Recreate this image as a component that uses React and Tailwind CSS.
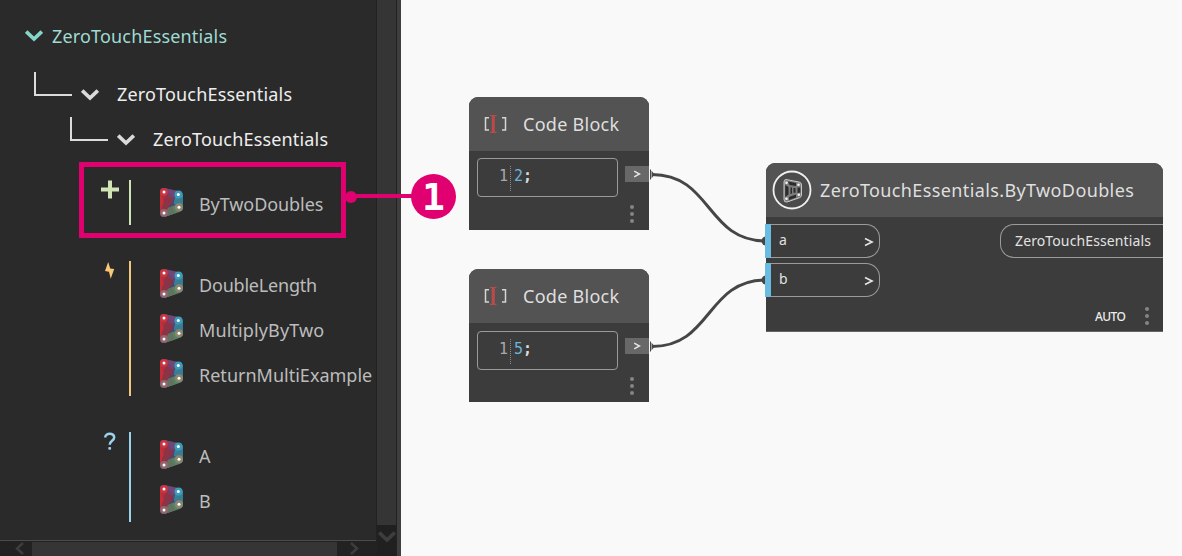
import React from 'react';

const SANS = "font-['Noto_Sans',sans-serif]";

function Chevron({ className = '' }) {
  return (
    <svg width="18" height="12" viewBox="0 0 18 12" className={`block shrink-0 ${className}`} fill="none">
      <path d="M1.2 1.6 L9 9 L16.8 1.6" stroke="currentColor" strokeWidth="3.7" />
    </svg>
  );
}

function DynamoIcon() {
  return (
    <svg width="23" height="29" viewBox="0 0 23 29" className="block shrink-0">
      <path d="M4 0 L19 3.2 Q23 4 23 8 V19 Q23 22.500 20 23.700 L5 28.800 Q0 29.500 0 25 V4 Q0 0 4 0Z" fill="#50466c" />
      <path d="M4 0 L19 3.2 L17 10 L8 9Z" fill="#704775" />
      <path d="M0 4 Q0 0 4 0 Q7 0 8 4 V20 L4 28.800 L0 25Z" fill="#b92c37" />
      <path d="M8 5 L13 13 L8 20 L2 25 L2 14Z" fill="#8c3346" />
      <path d="M0 4 L4 14 L0 23Z" fill="#c32e38" />
      <path d="M8 4 L16 13 L8 9Z" fill="#793e67" />
      <path d="M15 10 L19 3.2 Q23 4 23 8 V19 L14 16Z" fill="#3488a4" />
      <path d="M14 13 L23 8 V19 L17 19Z" fill="#397d94" />
      <path d="M8 20 L18 16 L23 19 Q23 22.500 20 23.700 L5 28.800Z" fill="#578464" />
      <path d="M8 20 L12 18.500 L15 25.400 L5 28.800Z" fill="#61735f" />
      <circle cx="4" cy="4" r="3.9" fill="#c73645" />
      <circle cx="18.5" cy="6.600" r="4" fill="#3c9cbc" />
      <circle cx="19" cy="19.200" r="4" fill="#8c866f" />
      <circle cx="4" cy="24.900" r="3.9" fill="#936570" />
      <circle cx="4" cy="4" r="1.5" fill="#fff" />
      <circle cx="18.3" cy="6.600" r="1.5" fill="#fff" />
      <circle cx="19" cy="19.200" r="1.5" fill="#fff" />
      <circle cx="4" cy="24.900" r="1.5" fill="#fff" />
    </svg>
  );
}

function TreeRow({ label, indent }) {
  return (
    <div className={`flex h-[45px] shrink-0 ${indent}`}>
      <div className="h-6 w-[38px] shrink-0 border-b-2 border-l-2 border-[#dcdcdc]" />
      <Chevron className="ml-[9px] mt-[17px] text-[#dadada]" />
      <span className="ml-[18px] text-[18px] leading-[45px] tracking-[0.17px] text-[#eeeeee]">{label}</span>
    </div>
  );
}

function Group({ icon, bar, items }) {
  return (
    <div className="flex shrink-0 pl-[100px]">
      <div className="w-[29px] shrink-0">{icon}</div>
      <div className={`w-0.5 shrink-0 ${bar}`} />
      <div className="ml-[29px]">
        {items.map(({ name, tracking }) => (
          <div key={name} className="flex h-[45px] items-start">
            <div className="pt-2">
              <DynamoIcon />
            </div>
            <span className={`ml-4 whitespace-nowrap pt-[2px] text-[18px] leading-[45px] text-[#bcbcbc] ${tracking}`}>{name}</span>
          </div>
        ))}
      </div>
    </div>
  );
}

const creators = [{ name: 'ByTwoDoubles', tracking: 'tracking-[-0.08px]' }];
const actions = [
  { name: 'DoubleLength', tracking: 'tracking-[-0.2px]' },
  { name: 'MultiplyByTwo', tracking: 'tracking-[0.12px]' },
  { name: 'ReturnMultiExample', tracking: 'tracking-[0.01px]' },
];
const queries = [
  { name: 'A', tracking: 'tracking-normal' },
  { name: 'B', tracking: 'tracking-normal' },
];

const plus = (
  <svg width="20" height="20" viewBox="0 0 20 20" className="block">
    <path d="M1 9.5H19M10 .5V18.500" stroke="#d0e4b5" strokeWidth="4" fill="none" />
  </svg>
);
const bolt = (
  <svg width="20" height="20" viewBox="0 0 20 20" className="block">
    <path d="M8.200 1 L5 10 L9 10.800 L10.700 17.800 L14.200 8 L10.200 7.600Z" fill="#fbc87a" />
  </svg>
);
const question = (
  <svg width="20" height="20" viewBox="0 0 20 20" className="block" fill="none">
    <path d="M5.200 5.500 C5.200 .6 14.200 .6 14.200 5.200 C14.200 8.800 9.700 8.600 9.700 12.700" stroke="#9cd3ec" strokeWidth="2.500" />
    <rect x="8.300" y="15" width="2.800" height="2.800" rx="1" fill="#9cd3ec" />
  </svg>
);

function Sidebar() {
  return (
    <aside className="flex h-full w-[401px] shrink-0 bg-[#2a2a2a]">
      <div className="flex w-[376px] flex-col">
        <div className="flex h-[540px] flex-col overflow-hidden">
          <div className="mt-3.5 flex h-[45px] shrink-0 pl-[25px] text-[#85d5c9]">
            <Chevron className="mt-4" />
            <span className="ml-[9px] text-[18px] leading-[45px] tracking-[0.17px] text-[#9fdbd2]">ZeroTouchEssentials</span>
          </div>
          <div className="h-[13px] shrink-0" />
          <TreeRow label="ZeroTouchEssentials" indent="pl-[34px]" />
          <TreeRow label="ZeroTouchEssentials" indent="pl-[70px]" />
          <div className="mt-[18px] flex flex-col gap-9">
            <Group icon={plus} bar="bg-[#d0e4b5]" items={creators} />
            <Group icon={bolt} bar="bg-[#f5c67f]" items={actions} />
            <Group icon={question} bar="bg-[#9cd3ec]" items={queries} />
          </div>
        </div>
        <div className="flex h-4 items-center border-t border-[#4b4b4b] bg-[#222222] text-[#3d3d3d]">
          <div className="flex w-8 justify-end pr-2">
            <svg width="9" height="13" viewBox="0 0 9 13" fill="none"><path d="M8 1 L2 6.500 L8 12" stroke="currentColor" strokeWidth="2.500" /></svg>
          </div>
          <div className="mt-px h-full w-[305px] bg-[#353535]" />
          <div className="pl-[13px]">
            <svg width="9" height="13" viewBox="0 0 9 13" fill="none"><path d="M1 1 L7 6.500 L1 12" stroke="currentColor" strokeWidth="2.500" /></svg>
          </div>
        </div>
      </div>
      <div className="flex w-[21px] flex-col border-x border-[#222222] bg-[#202020]">
        <div className="h-[525px] bg-[#353535]" />
        <div className="flex justify-center pt-1.5 text-[#3d3d3d]">
          <Chevron />
        </div>
      </div>
      <div className="w-1 bg-[#3e3e3e]" />
    </aside>
  );
}

function Dots({ className = '' }) {
  return (
    <div className={`flex flex-col gap-[3px] ${className}`}>
      <div className="size-1 rounded-full bg-[#858585]" />
      <div className="size-1 rounded-full bg-[#858585]" />
      <div className="size-1 rounded-full bg-[#858585]" />
    </div>
  );
}

function CodeBlock({ value, place, inset }) {
  return (
    <div className={`absolute left-[469px] flex h-[133px] w-[180px] flex-col overflow-hidden rounded-t-[9px] bg-[#3c3c3c] ${place}`}>
      <div className="flex h-[54px] shrink-0 items-center bg-[#535353] pl-[15px]">
        <svg width="24" height="20" viewBox="0 0 24 20" fill="none" className="shrink-0">
          <path d="M5 3.700H1.500V16H5M18 3.700H21.500V16H18" stroke="#d5d5d5" strokeWidth="1.500" />
          <path d="M6 1.500H12.500M6 18.300H12.500" stroke="#bd4a48" strokeWidth="1.200" />
          <path d="M9.300 1.500V18.300" stroke="#bd4a48" strokeWidth="3" />
        </svg>
        <span className="ml-[15px] whitespace-nowrap text-[18px] tracking-[0.27px] text-[#dfdfdf]">Code Block</span>
      </div>
      <div className="flex h-[46px] shrink-0 pl-2">
        <div className={`flex h-[39px] w-[141px] items-start rounded-[4px] border border-[#9a9a9a] pl-[21px] pt-[6px] font-['DejaVu_Sans_Mono',monospace] text-[15px] leading-[22px] ${inset}`}>
          <span className="w-[11px] text-[#a9a9a9]">1</span>
          <span className="mt-px h-[25px] border-l border-dotted border-[#8a8a8a]" />
          <span className="ml-[3px] w-[9px] text-[#6cb5da]">{value}</span>
          <span className="font-bold text-[#dddddd]">;</span>
        </div>
        <div className="ml-[7px] mt-[15px] flex h-4 w-6 items-center justify-center bg-[#686868]">
          <svg width="8" height="8" viewBox="0 0 8 8" fill="none"><path d="M1.200 1.200 L6.400 4 L1.200 6.800" stroke="#e4e4e4" strokeWidth="1.500" /></svg>
        </div>
      </div>
      <Dots className="ml-[161px] mt-2" />
    </div>
  );
}

function InputPort({ name }) {
  return (
    <div className="flex h-[34px] w-[115px] items-center rounded-r-[14px] border border-l-0 border-[#9b9b9b]">
      <div className="-my-px h-[34px] w-1.5 shrink-0 bg-[#69bbe2]" />
      <span className="-mt-0.5 ml-[8px] w-[85px] text-[14px] leading-5 text-[#e2e2e2]">{name}</span>
      <svg width="10" height="10" viewBox="0 0 10 10" fill="none" className="mt-px shrink-0"><path d="M1 1.500 L8 5 L1 8.500" stroke="#e4e4e4" strokeWidth="1.700" /></svg>
    </div>
  );
}

function ConstructorNode() {
  return (
    <div className="absolute left-[766px] top-[163px] h-[169px] w-[397px]">
      <div className="flex h-full flex-col rounded-t-[9px] border-b border-[#666666] bg-[#3c3c3c]">
        <div className="flex h-[54px] shrink-0 items-center rounded-t-[9px] bg-[#535353] pl-[6px]">
          <svg width="40" height="40" viewBox="0 0 40 40" className="shrink-0" fill="none">
            <circle cx="20" cy="20" r="18.500" fill="#4b4b4b" stroke="#f0f0f0" strokeWidth="1.800" />
            <path d="M14 9.500 L27 12 Q29.500 12.500 29.500 15 V25 Q29.500 27 27.500 27.700 L15 32 Q12 32.500 12 29.500 V12 Q12 9.500 14 9.500Z" fill="#7d7d7d" stroke="#c8c8c8" strokeWidth="1" />
            <g fill="#2c2c2c">
              <path d="M16 11.500 L24 13 V16 L17.500 15Z" />
              <path d="M13.200 15 L16.500 17 V24.500 L13.200 27Z" />
              <path d="M25.500 17.500 H28.300 V22.500 L25.500 23Z" />
              <path d="M17 27 L24 24.500 V27.500 L17 30Z" />
              <path d="M18.500 17.500 H20 V23.500 L18.500 24Z M21.500 18 H23.500 V22.800 H21.500Z" />
            </g>
            <g fill="#f4f4f4"><circle cx="14.500" cy="12.800" r="1.300" /><circle cx="26.500" cy="14.800" r="1.300" /><circle cx="26.800" cy="24.800" r="1.300" /><circle cx="14.500" cy="28.800" r="1.300" /></g>
          </svg>
          <span className="ml-2 whitespace-nowrap text-[18px] tracking-[0.38px] text-[#dfdfdf]">ZeroTouchEssentials.ByTwoDoubles</span>
        </div>
        <div className="-ml-px mt-[7px] flex justify-between">
          <div className="flex flex-col gap-[5px]">
            <InputPort name="a" />
            <InputPort name="b" />
          </div>
          <div className="flex h-[34px] w-[163px] items-center rounded-l-[14px] border border-r-0 border-[#9b9b9b] pb-px pl-3.5 text-[14px] tracking-[0.12px] text-[#e2e2e2]">
            ZeroTouchEssentials
          </div>
        </div>
        <div className="mt-2.5 flex items-start justify-end pr-[14px]">
          <span className="mt-px w-[50px] text-[12px] font-medium leading-[18px] tracking-[-0.6px] text-[#ededed]">AUTO</span>
          <Dots />
        </div>
      </div>
    </div>
  );
}

export default function App() {
  return (
    <div className={`relative flex h-[556px] w-[1182px] overflow-hidden bg-[#f9f9f9] ${SANS}`}>
      <Sidebar />
      <main className="flex-1">
        <svg width="130" height="200" viewBox="645 160 130 200" className="absolute left-[645px] top-[160px]" fill="none">
          <path d="M652 174.500 C712 174.500 706 241 766 241" stroke="#464646" strokeWidth="3" />
          <path d="M652 346.500 C712 346.500 706 280 766 280" stroke="#464646" strokeWidth="3" />
          <path d="M650.500 169.500 V179.500 M650.500 341.500 V351.500" stroke="#464646" strokeWidth="1" />
          <path d="M651.500 170.500 L654.500 174.500 L651.500 178.500Z M651.500 342.500 L654.500 346.500 L651.500 350.500Z" fill="#464646" />
          <circle cx="766" cy="241" r="4.500" fill="#464646" />
          <circle cx="766" cy="280" r="4.500" fill="#464646" />
        </svg>
        <CodeBlock value="2" place="top-[97px]" inset="mt-[7px]" />
        <CodeBlock value="5" place="top-[269px]" inset="mt-2" />
        <ConstructorNode />
      </main>
      <div className="absolute left-[79px] top-[162px] h-[76px] w-[267px] border-[5px] border-[#e1006f]" />
      <div className="absolute left-[345px] top-[174px] flex items-center">
        <div className="size-3 rounded-full bg-[#e1006f]" />
        <div className="-ml-1 -mt-px h-1 w-[60px] bg-[#e1006f]" />
        <div className="-ml-[2px] flex size-[45px] items-center justify-center rounded-full bg-[#e1006f]">
          <span className="font-['DejaVu_Sans_Mono',monospace] text-[38px] font-bold leading-none text-white">1</span>
        </div>
      </div>
    </div>
  );
}
